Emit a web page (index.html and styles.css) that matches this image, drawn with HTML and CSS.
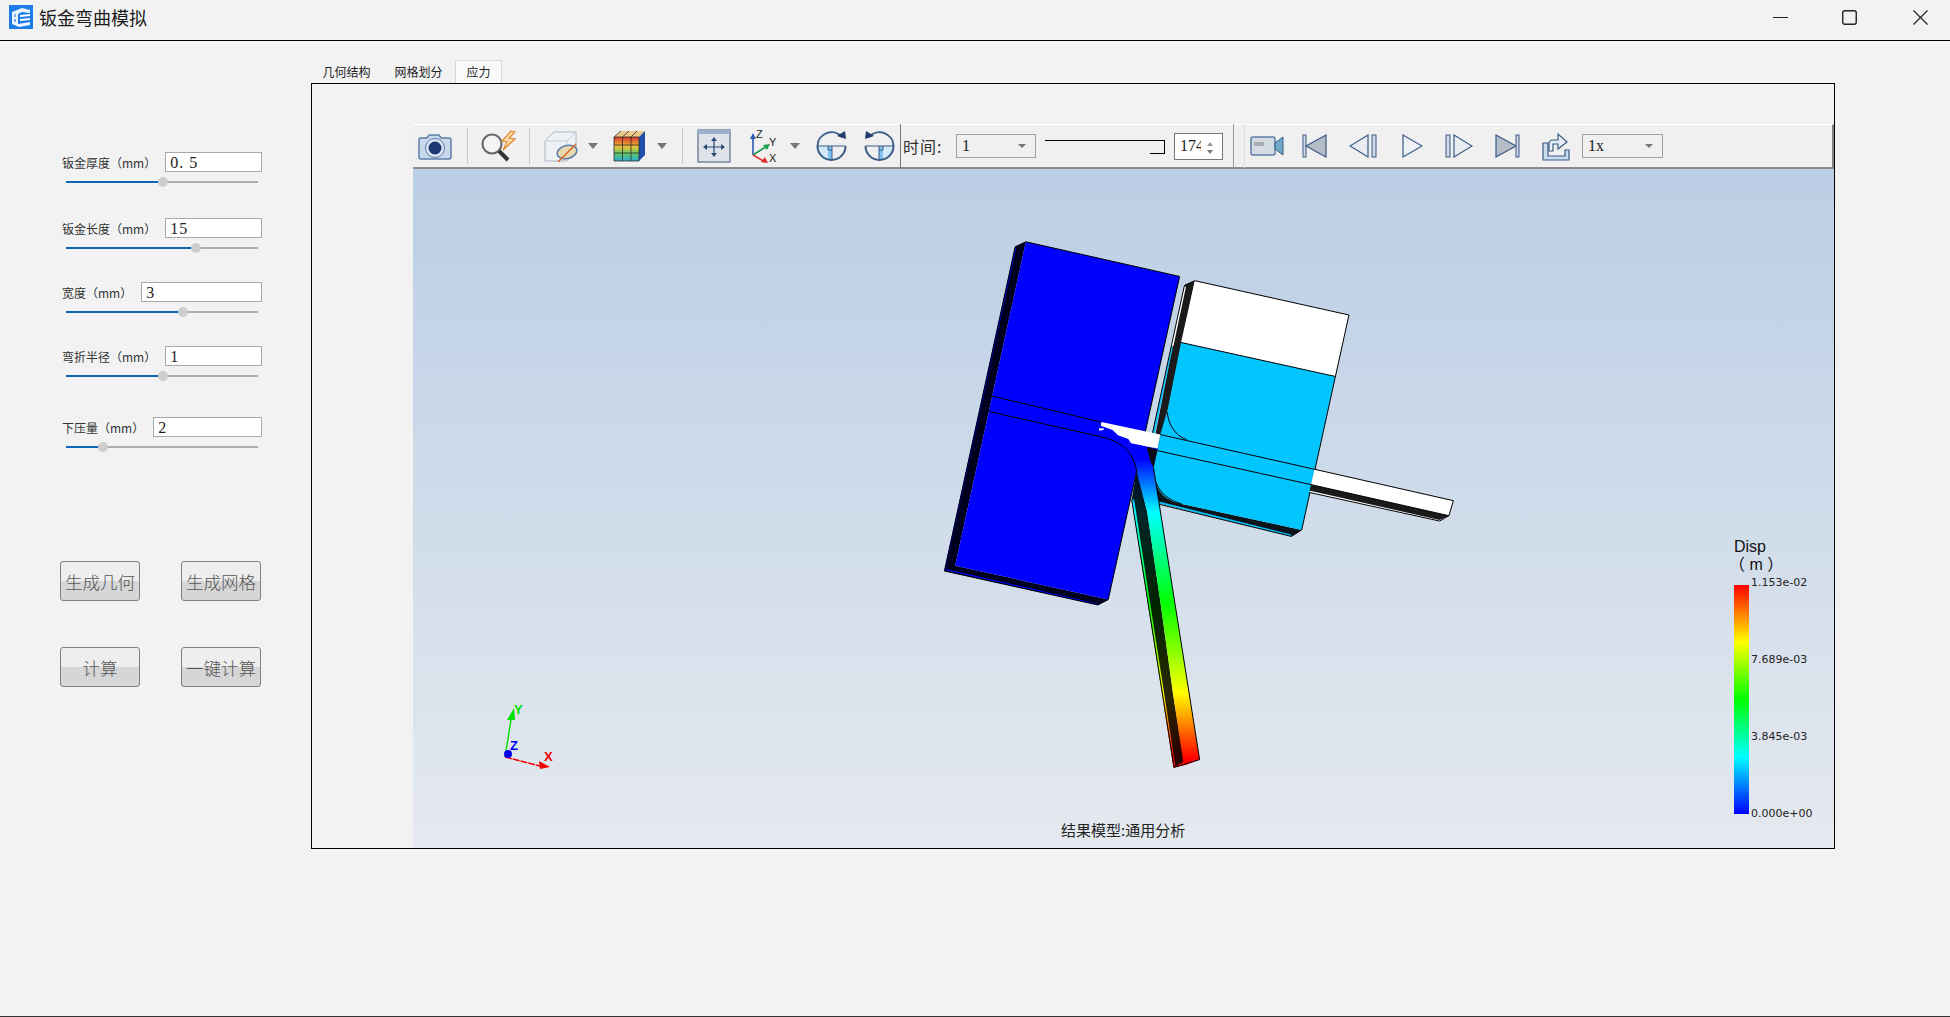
FILE: index.html
```html
<!DOCTYPE html>
<html lang="zh-CN">
<head>
    <meta charset="UTF-8">
    <title>钣金弯曲模拟</title>
    <link rel="stylesheet" href="styles.css">
</head>
<body>
    <div class="titlebar">
        <svg class="app-logo" width="24" height="24" viewBox="0 0 24 24">
            <rect width="24" height="24" fill="#1c7ce8"/>
            <path d="M3 7 L13 3 L21 5 L21 8 L13 7 L9 9 L9 19 L21 17 L21 20 L10 22 L3 19 Z" fill="#fff" opacity=".92"/>
            <path d="M11 10 L21 9 L21 11 L11 12 Z M11 14 L21 13 L21 15 L11 16 Z" fill="#fff"/>
            <path d="M5 9 L7 9 L7 12 L5 12 Z M5 14 L7 14 L7 17 L5 17 Z" fill="#7db4f2"/>
        </svg>
        <span class="app-title">钣金弯曲模拟</span>
        <div class="win-controls">
            <svg width="15" height="15" viewBox="0 0 15 15"><path d="M0 7.5 H15" stroke="#222" stroke-width="1"/></svg>
            <svg width="15" height="15" viewBox="0 0 15 15"><rect x=".75" y=".75" width="13.5" height="13.5" rx="2" fill="none" stroke="#222" stroke-width="1.4"/></svg>
            <svg width="15" height="15" viewBox="0 0 15 15"><path d="M.5 .5 L14.5 14.5 M14.5 .5 L.5 14.5" stroke="#222" stroke-width="1.2"/></svg>
        </div>
    </div>

    <div class="main">
        <div class="sidebar">
            <div class="fields">
                <div class="field">
                    <div class="field-row"><label>钣金厚度（mm）</label><div class="num-input">0. 5</div></div>
                    <div class="slider"><div class="slider-fill" style="width:50.5%"><i></i></div></div>
                </div>
                <div class="field">
                    <div class="field-row"><label>钣金长度（mm）</label><div class="num-input">15</div></div>
                    <div class="slider"><div class="slider-fill" style="width:67.7%"><i></i></div></div>
                </div>
                <div class="field">
                    <div class="field-row"><label>宽度（mm）</label><div class="num-input">3</div></div>
                    <div class="slider"><div class="slider-fill" style="width:60.9%"><i></i></div></div>
                </div>
                <div class="field">
                    <div class="field-row"><label>弯折半径（mm）</label><div class="num-input">1</div></div>
                    <div class="slider"><div class="slider-fill" style="width:50.5%"><i></i></div></div>
                </div>
                <div class="field">
                    <div class="field-row"><label>下压量（mm）</label><div class="num-input">2</div></div>
                    <div class="slider"><div class="slider-fill" style="width:19.3%"><i></i></div></div>
                </div>
            </div>
            <div class="actions">
                <button>生成几何</button>
                <button>生成网格</button>
                <button>计算</button>
                <button>一键计算</button>
            </div>
        </div>

        <div class="content">
            <div class="tabs">
                <div class="tab tab-geo">几何结构</div>
                <div class="tab tab-mesh">网格划分</div>
                <div class="tab tab-active">应力</div>
            </div>
            <div class="frame">
                <div class="toolbar">
                    <svg class="tool-camera" width="34" height="27" viewBox="0 0 34 27">
                        <path d="M2 5 H9 L11 2 H21 L23 5 H31 Q33 5 33 7 V24 Q33 26 31 26 H3 Q1 26 1 24 V7 Q1 5 2 5 Z" fill="#c9d9ec" stroke="#5d7ea8" stroke-width="1.5"/>
                        <circle cx="17" cy="15" r="9.5" fill="#dce7f3" stroke="#5d7ea8"/>
                        <circle cx="17" cy="15" r="6.500" fill="#1e3a72"/>
                    </svg>
                    <i class="sep sep-a"></i>
                    <svg class="tool-probe" width="35" height="32" viewBox="0 0 35 32">
                        <circle cx="11" cy="14" r="9.500" fill="#f4f4f4" stroke="#666" stroke-width="2"/>
                        <path d="M18 21 L27 30" stroke="#333" stroke-width="4"/>
                        <path d="M30 1 L21 11 L26 12 L22 20 L34 9 L28 8 L34 2 Z" fill="#f8d9a8" stroke="#e08a2e" stroke-width="1.2"/>
                    </svg>
                    <i class="sep sep-b"></i>
                    <svg class="tool-clip" width="34" height="32" viewBox="0 0 34 32">
                        <path d="M1 11 L10 2 H32 V22 L23 31 H1 Z" fill="#eef1f5" stroke="#aab6c6"/>
                        <path d="M1 11 H23 V31 M23 11 L32 2" fill="none" stroke="#c3ccd8"/>
                        <ellipse cx="23" cy="22" rx="10" ry="6.500" fill="#e8d9ae" stroke="#5d7ea8" stroke-width="1.6" transform="rotate(-15 23 22)"/>
                        <path d="M14 32 L32 14" stroke="#d9622b" stroke-width="1.4"/>
                    </svg>
                    <i class="drop-arrow arrow-a"></i>
                    <svg class="tool-contour" width="33" height="32" viewBox="0 0 33 32">
                        <defs>
                            <linearGradient id="contourFace" x1="0" y1="0" x2="0" y2="1">
                                <stop offset="0" stop-color="#d8322b"/>
                                <stop offset=".4" stop-color="#eec23a"/>
                                <stop offset=".7" stop-color="#57c96a"/>
                                <stop offset="1" stop-color="#2fa8d8"/>
                            </linearGradient>
                        </defs>
                        <path d="M1 7 L8 1 H32 L26 7 Z" fill="#e9c98a"/>
                        <path d="M26 7 L32 1 V25 L26 31 Z" fill="#1f4fa8"/>
                        <rect x="1" y="7" width="25" height="24" fill="url(#contourFace)"/>
                        <path d="M1 7 H26 V31 H1 Z M9.500 7 V31 M18 7 V31 M1 15 H26 M1 23 H26 M8 1 L1 7 M16 1 L9.500 7 M24 1 L18 7" fill="none" stroke="#2b2b2b" stroke-width=".8"/>
                    </svg>
                    <i class="drop-arrow arrow-b"></i>
                    <i class="sep sep-c"></i>
                    <svg class="tool-fit" width="34" height="34" viewBox="0 0 34 34">
                        <rect x="1" y="1" width="32" height="32" fill="#dfe3e9" stroke="#5a7193" stroke-width="1.2"/>
                        <rect x="1" y="1" width="32" height="4" fill="#9db2cf"/>
                        <path d="M17 10 V26 M9 18 H25" stroke="#2a4a78" stroke-width="1.2"/>
                        <path d="M17 8 L14 12 H20 Z M17 28 L14 24 H20 Z M6 18 L10 15 V21 Z M28 18 L24 15 V21 Z" fill="#2a4a78"/>
                    </svg>
                    <svg class="tool-axes" width="28" height="34" viewBox="0 0 28 34">
                        <path d="M3 26 V8" stroke="#2f57b4" stroke-width="1.6"/><path d="M3 4 L0 10 H6 Z" fill="#2f57b4"/>
                        <path d="M3 26 L17 17" stroke="#1e9b4e" stroke-width="1.6"/><path d="M20 15 L13 16 L17 21 Z" fill="#1e9b4e"/>
                        <path d="M3 26 L15 33" stroke="#e0302a" stroke-width="1.6"/><path d="M18 34 L11 33 L15 28 Z" fill="#e0302a"/>
                        <text x="6" y="9" class="axis-letter">Z</text>
                        <text x="19" y="17" class="axis-letter">Y</text>
                        <text x="19" y="33" class="axis-letter">X</text>
                    </svg>
                    <i class="drop-arrow arrow-c"></i>
                    <svg class="tool-rot" width="31" height="32" viewBox="0 0 31 32">
                        <path d="M1.500 16 A14 14 0 0 0 16 30 V16 Z" fill="#d3eafa"/>
                        <path d="M16 16 H12 V30 H16 Z" fill="#7fc4ee"/>
                        <path d="M1.500 16 H29.500 M16 16 V30 M12 16 V20 H16" fill="none" stroke="#3b5a85"/>
                        <path d="M26 7 A14 14 0 0 0 1.500 16 A14 14 0 0 0 29.500 16" fill="none" stroke="#3b5a85" stroke-width="2"/>
                        <path d="M30 9 L29 1 L21 6 Z" fill="#1f3c6e"/>
                    </svg>
                    <svg class="tool-rot2" width="31" height="32" viewBox="0 0 31 32">
                        <path d="M15 16 H29.500 A14 14 0 0 1 15 30 Z" fill="#d3eafa"/>
                        <path d="M15 16 H19 V30 H15 Z" fill="#7fc4ee"/>
                        <path d="M1.500 16 H29.500 M15 16 V30 M19 16 V20 H15" fill="none" stroke="#3b5a85"/>
                        <path d="M5 7 A14 14 0 0 1 29.500 16 A14 14 0 0 1 1.500 16" fill="none" stroke="#3b5a85" stroke-width="2"/>
                        <path d="M1 9 L2 1 L10 6 Z" fill="#1f3c6e"/>
                    </svg>
                    <i class="sep-dark"></i>
                    <span class="time-label">时间:</span>
                    <div class="combo combo-time"><span>1</span><i></i></div>
                    <div class="time-slider"><i></i></div>
                    <div class="spin"><span class="spin-text">174</span><i class="spin-up"></i><i class="spin-down"></i></div>
                    <i class="sep sep-d"></i>
                    <i class="sep sep-e"></i>
                    <svg class="tool-video" width="34" height="20" viewBox="0 0 34 20">
                        <rect x="1" y="1" width="24" height="18" rx="2" fill="#d5dbe3" stroke="#5d7ea8" stroke-width="1.5"/>
                        <rect x="4" y="6" width="10" height="4" fill="#a9aeb5"/>
                        <path d="M25 7 L33 1 V19 L25 13 Z" fill="#6fa7c9" stroke="#3b5a85"/>
                    </svg>
                    <svg class="tool-first" width="25" height="24" viewBox="0 0 25 24">
                        <rect x="1" y="1" width="3" height="22" fill="#cfd8e4" stroke="#3b5a85"/>
                        <path d="M24 1 L4 12 L24 23 Z" fill="#b4bcc8" stroke="#3b5a85" stroke-width="1.2"/>
                    </svg>
                    <svg class="tool-prev" width="28" height="24" viewBox="0 0 28 24">
                        <path d="M19 1 L1 12 L19 23 Z" fill="#e9edf2" stroke="#3b5a85" stroke-width="1.2"/>
                        <rect x="23" y="1" width="4" height="22" fill="#cfd8e4" stroke="#3b5a85"/>
                    </svg>
                    <svg class="tool-play" width="21" height="24" viewBox="0 0 21 24">
                        <path d="M1 1 L20 12 L1 23 Z" fill="#eef1f5" stroke="#3b5a85" stroke-width="1.2"/>
                    </svg>
                    <svg class="tool-next" width="28" height="24" viewBox="0 0 28 24">
                        <rect x="1" y="1" width="4" height="22" fill="#cfd8e4" stroke="#3b5a85"/>
                        <path d="M9 1 L27 12 L9 23 Z" fill="#e9edf2" stroke="#3b5a85" stroke-width="1.2"/>
                    </svg>
                    <svg class="tool-last" width="25" height="24" viewBox="0 0 25 24">
                        <path d="M1 1 L21 12 L1 23 Z" fill="#b4bcc8" stroke="#3b5a85" stroke-width="1.2"/>
                        <rect x="21" y="1" width="3" height="22" fill="#cfd8e4" stroke="#3b5a85"/>
                    </svg>
                    <svg class="tool-export" width="28" height="29" viewBox="0 0 28 29">
                        <path d="M1 11 H6 V24 H23 V18 H27 V28 H1 Z" fill="#c9dcee" stroke="#3b5a85" stroke-width="1.2"/>
                        <path d="M7 19 V12 Q7 8 11 8 H16 V2 L25 10 L16 17 V12 H11 V19 Z" fill="#e4edf5" stroke="#3b5a85" stroke-width="1.2"/>
                    </svg>
                    <div class="combo combo-speed"><span>1x</span><i></i></div>
                </div>

                <div class="viewport">
                    <svg class="scene" width="1420" height="680" viewBox="413 168 1420 680">
                        <defs>
                            <linearGradient id="bendFace" gradientUnits="userSpaceOnUse" x1="0" y1="640" x2="0" y2="1480">
                                <stop offset="0" stop-color="#0000ff"/>
                                <stop offset=".18" stop-color="#00ffff"/>
                                <stop offset=".48" stop-color="#00ff00"/>
                                <stop offset=".78" stop-color="#ffff00"/>
                                <stop offset="1" stop-color="#ff0000"/>
                            </linearGradient>
                            <linearGradient id="bendSide" gradientUnits="userSpaceOnUse" x1="0" y1="640" x2="0" y2="1480">
                                <stop offset="0" stop-color="#00001e"/>
                                <stop offset=".18" stop-color="#00262a"/>
                                <stop offset=".48" stop-color="#002400"/>
                                <stop offset=".78" stop-color="#282800"/>
                                <stop offset="1" stop-color="#2a0000"/>
                            </linearGradient>
                        </defs>
                        <!-- model traced in zoomed crop coordinates -->
                        <g class="model" transform="translate(930 230) scale(.3448 .3571)">
                            <path d="M247 47 L42 955 L487 1050 L517 1035 L73 940 L278 33 Z" fill="#00001e"/>
                            <path d="M247 47 L42 950 L45 950 L250 50 Z" fill="#0000ff"/>
                            <path d="M42 952 L487 1050 L489 1047 L45 949 Z" fill="#0000ff"/>
                            <path d="M278 33 L724 130 L517 1035 L73 940 Z" fill="#0000ff"/>
                            <path d="M247 47 L278 33 L724 130 L517 1035 L487 1050 L42 955 Z" class="edge"/>

                            <path d="M738 155 L768 142 L650 690 L640 640 Z" fill="#1a1a1a"/>
                            <path d="M738 155 L700 325 L706 325 L742 160 Z" fill="#fff"/>
                            <path d="M700 325 L645 570 L652 570 L704 328 Z" fill="#00c5ff"/>
                            <path d="M650 680 L655 710 C668 745 695 760 730 767 L1078 840 L1048 858 L664 765 Z" fill="#0a141a"/>
                            <path d="M664 765 L1048 858 L1047 853 L664 760 Z" fill="#00c5ff"/>
                            <path d="M768 142 L1215 238 L1175 410 L728 315 Z" fill="#fff"/>
                            <path d="M728 315 L1175 410 L1078 840 L730 767 C695 760 668 745 655 710 L648 670 L660 612 L668 573 L690 500 Z" fill="#00c5ff"/>
                            <path d="M738 155 L768 142 L1215 238 L1078 840 L1048 858 L664 768" class="edge"/>
                            <path d="M738 155 L645 570 M728 315 L1175 410" class="edge"/>
                            <path d="M688 510 C692 550 715 578 745 587" class="edge"/>
                            <path d="M648 670 C650 710 668 750 730 767" class="edge"/>

                            <path d="M600 670 L585 755 L706 1505 L745 1497 L737 1490 L705 1300 L668 1040 L630 790 Z" fill="url(#bendSide)"/>
                            <path d="M585 755 L706 1505 L712 1503 L592 755 Z" fill="url(#bendFace)"/>
                            <path d="M706 1505 L745 1497 L782 1483 L735 1490 Z" fill="#ff0000"/>
                            <path d="M583 597 L660 612 L648 665 L782 1483 L735 1492 L705 1300 L668 1040 L630 790 L600 680 C596 650 590 625 578 610 Z" fill="url(#bendFace)"/>
                            <path d="M628 608 L660 615 L648 665 L640 650 Z" fill="#0b0b1a"/>
                            <path d="M585 755 L708 1505 L782 1483 L648 665" class="edge"/>

                            <path d="M497 538 L668 573 L660 612 L583 597 L575 585 L545 575 L530 560 L495 548 Z" fill="#fff"/>
                            <path d="M490 555 L505 556 L503 560 L491 562 Z" fill="#fff"/>
                            <path d="M1102 730 L1505 800 L1478 815 L1100 736 Z" fill="#fff"/>
                            <path d="M1105 713 L1505 800 L1478 812 L1102 730 Z" fill="#1a1a1a"/>
                            <path d="M1115 670 L1518 758 L1505 800 L1105 713 Z" fill="#fff"/>
                            <path d="M1115 670 L1518 758 L1505 800 L1478 815 L1100 735" class="edge"/>
                            <path d="M1105 713 L1505 800" class="edge"/>

                            <path d="M180 465 L497 538 M668 573 L1115 670 M660 618 L1105 713" class="edge"/>
                            <path d="M170 508 L500 580 C540 590 590 610 600 680" class="edge"/>
                        </g>
                        <!-- orientation triad -->
                        <g class="triad">
                            <path d="M505 757 L511 720" stroke="#00e000" stroke-width="1.400"/>
                            <path d="M514 708 L507 720 L515 720 Z" fill="#00e000"/>
                            <path d="M505 757 L540 766" stroke="#f00000" stroke-width="1.400" stroke-dasharray="7 1"/>
                            <path d="M550 767 L539 761 L540 769 Z" fill="#f00000"/>
                            <circle cx="508" cy="754" r="4" fill="#0000f0"/>
                            <text x="514" y="714" class="triad-y">Y</text>
                            <text x="510" y="750" class="triad-z">Z</text>
                            <text x="544" y="761" class="triad-x">X</text>
                        </g>
                    </svg>
                    <div class="legend">
                        <div class="legend-title">Disp<br><span class="legend-unit">（ m ）</span></div>
                        <div class="legend-bar"></div>
                        <span class="legend-tick tick-1">1.153e-02</span>
                        <span class="legend-tick tick-2">7.689e-03</span>
                        <span class="legend-tick tick-3">3.845e-03</span>
                        <span class="legend-tick tick-4">0.000e+00</span>
                    </div>
                    <div class="caption">结果模型:通用分析</div>
                </div>
            </div>
        </div>
    </div>
    <div class="window-edge"></div>
</body>
</html>
```

FILE: styles.css
```css
* {
    box-sizing: border-box;
}
html, body {
    margin: 0;
    height: 1017px;
    overflow: hidden;
}
body {
    background: #f2f2f2;
    font-family: "Noto Sans CJK SC", "Liberation Sans", sans-serif;
    color: #222;
    position: relative;
}

/* title bar */
.titlebar {
    height: 41px;
    border-bottom: 1px solid #000;
    display: flex;
    align-items: flex-start;
    padding: 5px 0 0 9px;
}
.app-title {
    font-size: 18px;
    line-height: 24px;
    margin-left: 6px;
    color: #1c1c1c;
}
.win-controls {
    margin-left: auto;
    display: flex;
    gap: 54px;
    padding: 5px 22px 0 0;
}
.win-controls svg:last-child {
    margin-left: 2px;
}

.main {
    display: flex;
}

/* left form */
.sidebar {
    width: 311px;
    flex: none;
    padding: 111px 0 0 62px;
}
.fields {
    width: 200px;
    display: grid;
    grid-template-rows: 66px 64px 64px 71px 30px;
}
.field-row {
    display: flex;
    align-items: center;
    gap: 9px;
    height: 20px;
}
.field-row label {
    font-size: 12px;
    white-space: nowrap;
    color: #333;
}
.num-input {
    flex: 1;
    height: 20px;
    border: 1px solid #a9a9a9;
    background: #fff;
    font-family: "Liberation Serif", serif;
    font-size: 16px;
    letter-spacing: 1px;
    line-height: 19px;
    padding-left: 4px;
    color: #222;
}
.slider {
    width: 192px;
    height: 2px;
    margin: 9px 0 0 4px;
    background: #adadad;
}
.slider-fill {
    height: 2px;
    background: #0f66b5;
    position: relative;
}
.slider-fill i {
    position: absolute;
    right: -5px;
    top: -4px;
    width: 10px;
    height: 10px;
    border-radius: 50%;
    background: #cdcdcd;
}
.actions {
    display: grid;
    grid-template-columns: 80px 80px;
    column-gap: 41px;
    row-gap: 46px;
    margin: 114px 0 0 -2px;
}
.actions button {
    height: 40px;
    padding: 0;
    border: 1px solid #808080;
    border-radius: 3px;
    background: linear-gradient(#eeeeee 50%, #d6d6d6 50%);
    font-family: inherit;
    font-size: 17.500px;
    font-weight: 300;
    color: #555;
    white-space: nowrap;
}

/* tabs and frame */
.content {
    width: 1524px;
    padding-top: 19px;
}
.tabs {
    display: flex;
    height: 24px;
    font-size: 12px;
    line-height: 24px;
    color: #222;
    position: relative;
}
.tab {
    text-align: center;
}
.tab-geo {
    width: 71px;
}
.tab-mesh {
    width: 73px;
}
.tab-active {
    width: 47px;
    background: #fafafa;
    border: 1px solid #d8d8d8;
    border-bottom: none;
    height: 24px;
    line-height: 22px;
}
.frame {
    height: 766px;
    border: 1px solid #000;
    background: #f2f2f2;
    padding: 40px 0 0 101px;
    margin-top: -1px;
    position: relative;
}

/* toolbar */
.toolbar {
    height: 45px;
    background: #f0f0f0;
    border-top: 1px solid #fff;
    border-bottom: 2px solid #8c8c8c;
    border-right: 2px solid #808080;
    display: flex;
    align-items: center;
}
.toolbar svg {
    flex: none;
}
.axis-letter {
    font-family: "Liberation Sans", sans-serif;
    font-size: 11px;
    fill: #222;
}
.sep {
    width: 1px;
    height: 36px;
    background: #c8c8c8;
    flex: none;
}
.sep-dark {
    width: 1px;
    height: 44px;
    background: #777;
    flex: none;
    margin-left: 5px;
}
.drop-arrow {
    width: 0;
    height: 0;
    border-left: 5px solid transparent;
    border-right: 5px solid transparent;
    border-top: 6px solid #777;
    flex: none;
}
.tool-camera { margin-left: 5px; }
.sep-a { margin-left: 15px; }
.tool-probe { margin-left: 13px; }
.sep-b { margin-left: 13px; }
.tool-clip { margin-left: 14px; }
.arrow-a { margin-left: 10px; }
.tool-contour { margin-left: 15px; }
.arrow-b { margin-left: 11px; }
.sep-c { margin-left: 15px; }
.tool-fit { margin-left: 14px; }
.tool-axes { margin-left: 19px; }
.arrow-c { margin-left: 12px; }
.tool-rot { margin-left: 16px; }
.tool-rot2 { margin-left: 17px; }
.sep-d { margin-left: 10px; height: 44px; background: #999; }
.sep-e { margin-left: 10px; height: 44px; background: #ddd; }
.tool-video { margin-left: 5px; }
.tool-first { margin-left: 18px; }
.tool-prev { margin-left: 22px; }
.tool-play { margin-left: 25px; }
.tool-next { margin-left: 22px; }
.tool-last { margin-left: 22px; }
.tool-export { margin-left: 22px; }

.time-label {
    margin-left: 2px;
    width: 42px;
    font-size: 16px;
    letter-spacing: 1px;
    color: #333;
    white-space: nowrap;
    flex: none;
}
.combo {
    height: 24px;
    border: 1px solid #a0a0a0;
    display: flex;
    align-items: center;
    justify-content: space-between;
    padding: 0 9px 0 5px;
    font-family: "Liberation Serif", serif;
    font-size: 16px;
    color: #222;
    flex: none;
}
.combo i {
    width: 0;
    height: 0;
    border-left: 4px solid transparent;
    border-right: 4px solid transparent;
    border-top: 4px solid #777;
}
.combo-time {
    width: 80px;
    margin-left: 11px;
}
.combo-speed {
    width: 81px;
    margin-left: 12px;
}
.time-slider {
    width: 120px;
    height: 14px;
    align-self: flex-start;
    margin: 15px 0 0 9px;
    border-top: 1px solid #000;
    position: relative;
    flex: none;
}
.time-slider i {
    position: absolute;
    right: 0;
    top: 0;
    width: 15px;
    height: 13px;
    border-right: 1px solid #000;
    border-bottom: 1px solid #000;
    background: #f0f0f0;
}
.spin {
    width: 49px;
    height: 27px;
    margin-left: 9px;
    border: 1px solid #777;
    background: #fff;
    position: relative;
    flex: none;
    overflow: hidden;
}
.spin-text {
    position: absolute;
    left: 5px;
    top: 2px;
    width: 21px;
    overflow: hidden;
    font-family: "Liberation Serif", serif;
    font-size: 16px;
    line-height: 20px;
    color: #222;
}
.spin-up, .spin-down {
    position: absolute;
    right: 9px;
    width: 0;
    height: 0;
    border-left: 3px solid transparent;
    border-right: 3px solid transparent;
}
.spin-up {
    top: 8px;
    border-bottom: 4px solid #999;
}
.spin-down {
    top: 16px;
    border-top: 4px solid #777;
}

/* 3D view */
.viewport {
    height: 679px;
    background: linear-gradient(#bacee5, #e5e9ef);
    position: relative;
}
.scene {
    position: absolute;
    left: 0;
    top: -1px;
}
.edge {
    fill: none;
    stroke: #000;
    stroke-width: 1;
    vector-effect: non-scaling-stroke;
}
.triad text {
    font-family: "Liberation Sans", sans-serif;
    font-size: 13px;
    font-weight: bold;
}
.triad-y { fill: #00e000; }
.triad-z { fill: #0000f0; }
.triad-x { fill: #f00000; }
.legend {
    position: absolute;
    left: 1321px;
    top: 369px;
    width: 90px;
    height: 290px;
}
.legend-title {
    font-family: "Liberation Sans", "Noto Sans CJK SC", sans-serif;
    font-size: 16px;
    line-height: 18px;
    color: #111;
}
.legend-unit {
    margin-left: -5px;
}
.legend-bar {
    position: absolute;
    left: 0;
    top: 47px;
    width: 15px;
    height: 229px;
    background: linear-gradient(#ff0000, #ffff00 25%, #00ff00 50%, #00ffff 75%, #0000ff);
}
.legend-tick {
    position: absolute;
    left: 17px;
    font-family: "DejaVu Sans", sans-serif;
    font-size: 11px;
    line-height: 12px;
    color: #222;
    white-space: nowrap;
}
.tick-1 { top: 39px; }
.tick-2 { top: 116px; }
.tick-3 { top: 193px; }
.tick-4 { top: 270px; }
.caption {
    position: absolute;
    left: 648px;
    top: 651px;
    font-size: 15px;
    line-height: 20px;
    color: #222;
    white-space: nowrap;
}
.window-edge {
    position: absolute;
    left: 0;
    right: 0;
    bottom: 0;
    height: 1px;
    background: #333;
}
```
